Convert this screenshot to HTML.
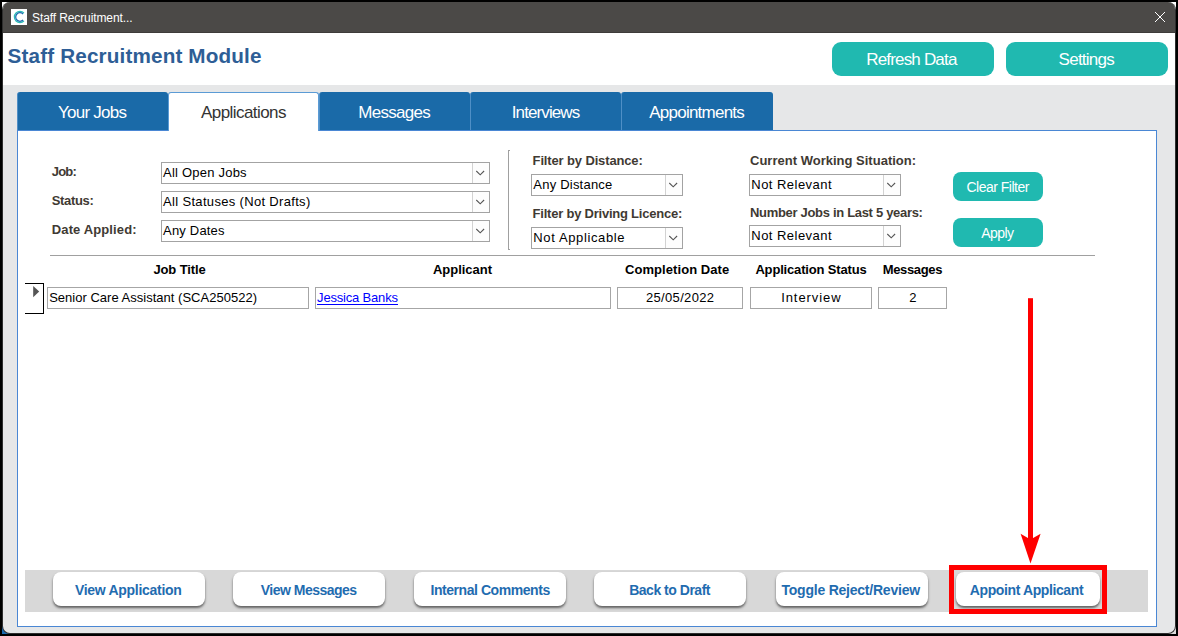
<!DOCTYPE html>
<html><head><meta charset="utf-8">
<style>
*{box-sizing:border-box;margin:0;padding:0}
html,body{width:1178px;height:636px;overflow:hidden;background:#000;font-family:"Liberation Sans",sans-serif}
.abs{position:absolute}
.t{position:absolute;white-space:nowrap;line-height:1.15}
#win{position:absolute;left:3px;top:2px;width:1172px;height:631px;background:#e6e7e8;border-radius:7px;overflow:hidden}
#tbar{position:absolute;left:0;top:0;width:100%;height:31px;background:#4b4947;border-bottom:1px solid #3e3c3a}
#hdr{position:absolute;left:0;top:31px;width:100%;height:52px;background:#fff}
.tbtn{position:absolute;background:#20b9b0;border-radius:9px}
.tab{position:absolute;top:90px;height:38px;width:151px;background:#1a6aa8;border-radius:3px 3px 0 0;border-left:1px solid #4f8fc6}
.tab.act{background:#fff;border:1px solid #5b9bd5;border-bottom:none;height:39px}
#panel{position:absolute;left:14px;top:128px;width:1140px;height:497px;background:#fff;border:1px solid #4a87d4}
.cmb{position:absolute;height:22px;border:1px solid #a3a3a3;background:#fff}
.cmb i{position:absolute;right:0;top:0;bottom:0;width:17px;border-left:1px solid #d2d2d2;background:#fdfdfd}
.cmb i svg{position:absolute;left:-1px;top:0}
.fld{position:absolute;top:285px;height:22px;border:1px solid #a6a6a6;background:#fff}
.bbtn{position:absolute;top:570.3px;height:33.7px;width:152px;background:#fff;border-radius:8px;box-shadow:0 2px 2.5px rgba(0,0,0,.55)}
</style></head><body>
<div class="abs" style="left:2px;top:2px;width:9px;height:9px;background:#fff"></div>
<div class="abs" style="left:1167px;top:2px;width:9px;height:9px;background:#fff"></div>
<div class="abs" style="left:2px;top:625px;width:9px;height:9px;background:#1c6bb0"></div>
<div class="abs" style="left:1167px;top:625px;width:9px;height:9px;background:#dcdcdc"></div>
<div class="abs" style="left:2px;top:2px;width:1174px;height:632px;background:#2e2e2e;border-radius:8px"></div>
<div id="win">
 <div id="tbar">
  <div class="abs" style="left:8px;top:7px;width:16px;height:16px;background:#fff"></div>
  <svg class="abs" style="left:8px;top:7px" width="16" height="16" viewBox="0 0 16 16"><path d="M12.96 4.04A5.6 5.6 0 1 0 12.96 11.96" fill="none" stroke="#2bbdb5" stroke-width="1.25"/><path d="M12.04 4.96A4.3 4.3 0 1 0 12.04 11.04" fill="none" stroke="#1f6cb0" stroke-width="1.25"/></svg>
  <svg class="abs" style="left:1151px;top:9px" width="12" height="12" viewBox="0 0 12 12"><path d="M1 1L11 11M11 1L1 11" stroke="#fff" stroke-width="1" fill="none"/></svg>
 </div>
 <div id="hdr">
  <div class="tbtn" style="left:829px;top:9px;width:162px;height:34px"></div>
  <div class="tbtn" style="left:1003px;top:9px;width:162px;height:34px"></div>
 </div>
 <div class="tab" style="left:14px"></div>
 <div class="tab" style="left:316px"></div>
 <div class="tab" style="left:467px"></div>
 <div class="tab" style="left:618px;width:152px"></div>
 <div id="panel"></div>
 <div class="tab act" style="left:165px"></div>

 <!-- filters -->
 <div class="cmb" style="left:158px;top:160px;width:329px"><i><svg width="17" height="20"><path d="M4.3 8L8.2 11.8L12.1 8" fill="none" stroke="#555" stroke-width="1.1"/></svg></i></div>
 <div class="cmb" style="left:158px;top:189px;width:329px"><i><svg width="17" height="20"><path d="M4.3 8L8.2 11.8L12.1 8" fill="none" stroke="#555" stroke-width="1.1"/></svg></i></div>
 <div class="cmb" style="left:158px;top:218px;width:329px"><i><svg width="17" height="20"><path d="M4.3 8L8.2 11.8L12.1 8" fill="none" stroke="#555" stroke-width="1.1"/></svg></i></div>
 <div class="abs" style="left:505px;top:148px;width:1px;height:100px;background:#a0a0a0"></div><div class="abs" style="left:506px;top:148px;width:1px;height:1px;background:#a0a0a0"></div><div class="abs" style="left:506px;top:247px;width:1px;height:1px;background:#a0a0a0"></div>
 <div class="cmb" style="left:528px;top:172px;width:152px"><i><svg width="17" height="20"><path d="M4.3 8L8.2 11.8L12.1 8" fill="none" stroke="#555" stroke-width="1.1"/></svg></i></div>
 <div class="cmb" style="left:528px;top:225px;width:152px"><i><svg width="17" height="20"><path d="M4.3 8L8.2 11.8L12.1 8" fill="none" stroke="#555" stroke-width="1.1"/></svg></i></div>
 <div class="cmb" style="left:746px;top:172px;width:152px"><i><svg width="17" height="20"><path d="M4.3 8L8.2 11.8L12.1 8" fill="none" stroke="#555" stroke-width="1.1"/></svg></i></div>
 <div class="cmb" style="left:746px;top:223px;width:152px"><i><svg width="17" height="20"><path d="M4.3 8L8.2 11.8L12.1 8" fill="none" stroke="#555" stroke-width="1.1"/></svg></i></div>
 <div class="tbtn" style="left:950px;top:170px;width:90px;height:29px;border-radius:8px"></div>
 <div class="tbtn" style="left:950px;top:216px;width:90px;height:29px;border-radius:8px"></div>
 <div class="abs" style="left:47px;top:253px;width:1045px;height:1px;background:#a0a0a0"></div>

 <!-- table -->
 <div class="abs" style="left:22px;top:281px;width:19px;height:31px;border:1px solid #000;border-left:none"></div>
 <svg class="abs" style="left:30px;top:284px" width="7" height="12"><path d="M0.2 0L6.2 5.6L0.2 11.2Z" fill="#555"/></svg>
 <div class="fld" style="left:44px;width:262px"></div>
 <div class="fld" style="left:312px;width:296px"></div>
 <div class="fld" style="left:614px;width:126px"></div>
 <div class="fld" style="left:747px;width:122px"></div>
 <div class="fld" style="left:875px;width:69px"></div>

 <!-- bottom bar -->
 <div class="abs" style="left:22px;top:568px;width:1123px;height:42px;background:#d8d8d8"></div>
 <div class="bbtn" style="left:49.6px"></div>
 <div class="bbtn" style="left:230.4px"></div>
 <div class="bbtn" style="left:411.3px"></div>
 <div class="bbtn" style="left:591.3px"></div>
 <div class="bbtn" style="left:772.5px"></div>
 <div class="bbtn" style="left:952.6px;width:144px"></div>

<span id="ttl" class="t" style="left:29.00px;top:10px;font-size:12px;color:#fff;letter-spacing:-0.105px;">Staff Recruitment...</span>
<span id="h1" class="t" style="left:4.60px;top:41.8px;font-size:20.7px;font-weight:bold;color:#2e5e96;letter-spacing:0.144px;">Staff Recruitment Module</span>
<span id="b1" class="t" style="left:863.20px;top:48px;font-size:17px;color:#fff;letter-spacing:-0.816px;">Refresh Data</span>
<span id="b2" class="t" style="left:1055.60px;top:48px;font-size:17px;color:#fff;letter-spacing:-0.748px;">Settings</span>
<span id="tab1" class="t" style="left:55.00px;top:101px;font-size:17px;color:#fff;letter-spacing:-0.761px;">Your Jobs</span>
<span id="tab2" class="t" style="left:198.00px;top:101px;font-size:17px;color:#333;letter-spacing:-0.561px;">Applications</span>
<span id="tab3" class="t" style="left:355.30px;top:101px;font-size:17px;color:#fff;letter-spacing:-0.712px;">Messages</span>
<span id="tab4" class="t" style="left:508.80px;top:101px;font-size:17px;color:#fff;letter-spacing:-0.903px;">Interviews</span>
<span id="tab5" class="t" style="left:646.30px;top:101px;font-size:17px;color:#fff;letter-spacing:-0.768px;">Appointments</span>
<span id="l1" class="t" style="left:48.80px;top:163px;font-size:13px;font-weight:bold;color:#3f3a33;letter-spacing:-0.818px;">Job:</span>
<span id="l2" class="t" style="left:48.80px;top:192px;font-size:13px;font-weight:bold;color:#3f3a33;letter-spacing:-0.344px;">Status:</span>
<span id="l3" class="t" style="left:48.80px;top:221px;font-size:13px;font-weight:bold;color:#3f3a33;letter-spacing:0.124px;">Date Applied:</span>
<span id="c1" class="t" style="left:160.10px;top:164px;font-size:13px;color:#000;letter-spacing:0.214px;">All Open Jobs</span>
<span id="c2" class="t" style="left:160.10px;top:193px;font-size:13px;color:#000;letter-spacing:0.323px;">All Statuses (Not Drafts)</span>
<span id="c3" class="t" style="left:160.10px;top:222px;font-size:13px;color:#000;letter-spacing:0.177px;">Any Dates</span>
<span id="l4" class="t" style="left:529.60px;top:152px;font-size:13px;font-weight:bold;color:#3f3a33;letter-spacing:-0.139px;">Filter by Distance:</span>
<span id="l5" class="t" style="left:529.60px;top:205px;font-size:13px;font-weight:bold;color:#3f3a33;letter-spacing:-0.225px;">Filter by Driving Licence:</span>
<span id="c4" class="t" style="left:530.30px;top:176px;font-size:13px;color:#000;letter-spacing:0.219px;">Any Distance</span>
<span id="c5" class="t" style="left:530.30px;top:229px;font-size:13px;color:#000;letter-spacing:0.621px;">Not Applicable</span>
<span id="l6" class="t" style="left:747.00px;top:152px;font-size:13px;font-weight:bold;color:#3f3a33;letter-spacing:0.009px;">Current Working Situation:</span>
<span id="l7" class="t" style="left:747.00px;top:204px;font-size:13px;font-weight:bold;color:#3f3a33;letter-spacing:-0.313px;">Number Jobs in Last 5 years:</span>
<span id="c6" class="t" style="left:748.30px;top:176px;font-size:13px;color:#000;letter-spacing:0.468px;">Not Relevant</span>
<span id="c7" class="t" style="left:748.30px;top:227px;font-size:13px;color:#000;letter-spacing:0.468px;">Not Relevant</span>
<span id="b3" class="t" style="left:963.50px;top:177px;font-size:14px;color:#fff;letter-spacing:-0.506px;">Clear Filter</span>
<span id="b4" class="t" style="left:978.30px;top:223px;font-size:14px;color:#fff;letter-spacing:-0.608px;">Apply</span>
<span id="h_1" class="t" style="left:150.40px;top:261px;font-size:13px;font-weight:bold;color:#000;letter-spacing:-0.115px;">Job Title</span>
<span id="h_2" class="t" style="left:430.00px;top:261px;font-size:13px;font-weight:bold;color:#000;letter-spacing:-0.029px;">Applicant</span>
<span id="h_3" class="t" style="left:622.00px;top:261px;font-size:13px;font-weight:bold;color:#000;letter-spacing:0.065px;">Completion Date</span>
<span id="h_4" class="t" style="left:752.40px;top:261px;font-size:13px;font-weight:bold;color:#000;letter-spacing:-0.166px;">Application Status</span>
<span id="h_5" class="t" style="left:879.70px;top:261px;font-size:13px;font-weight:bold;color:#000;letter-spacing:-0.337px;">Messages</span>
<span id="f1" class="t" style="left:46.20px;top:289px;font-size:13px;color:#000;letter-spacing:0.013px;">Senior Care Assistant (SCA250522)</span>
<span id="f2" class="t" style="left:314.10px;top:289px;font-size:13px;color:#0000ff;letter-spacing:-0.183px;">Jessica Banks</span>
<span id="f3" class="t" style="left:643.00px;top:289px;font-size:13px;color:#000;letter-spacing:0.325px;">25/05/2022</span>
<span id="f4" class="t" style="left:778.20px;top:289px;font-size:13px;color:#000;letter-spacing:0.921px;">Interview</span>
<span id="f5" class="t" style="left:906.20px;top:289px;font-size:13px;color:#000;letter-spacing:0.000px;">2</span>
<span id="bb1" class="t" style="left:71.90px;top:579.7px;font-size:14px;font-weight:bold;color:#1f6cb0;letter-spacing:-0.283px;">View Application</span>
<span id="bb2" class="t" style="left:257.80px;top:579.7px;font-size:14px;font-weight:bold;color:#1f6cb0;letter-spacing:-0.515px;">View Messages</span>
<span id="bb3" class="t" style="left:427.50px;top:579.7px;font-size:14px;font-weight:bold;color:#1f6cb0;letter-spacing:-0.445px;">Internal Comments</span>
<span id="bb4" class="t" style="left:626.20px;top:579.7px;font-size:14px;font-weight:bold;color:#1f6cb0;letter-spacing:-0.487px;">Back to Draft</span>
<span id="bb5" class="t" style="left:778.50px;top:579.7px;font-size:14px;font-weight:bold;color:#1f6cb0;letter-spacing:-0.227px;">Toggle Reject/Review</span>
<span id="bb6" class="t" style="left:966.80px;top:579.7px;font-size:14px;font-weight:bold;color:#1f6cb0;letter-spacing:-0.389px;">Appoint Applicant</span>
 <div class="abs" style="left:314px;top:302px;width:81px;height:1px;background:#00f"></div>

 <!-- red annotation -->
 <div class="abs" style="left:946px;top:563px;width:158px;height:49px;border:5px solid #f00"></div>
 <svg class="abs" style="left:1012px;top:292px" width="32" height="275" viewBox="0 0 32 275"><rect x="13" y="4.2" width="5" height="243" fill="#f00"/><path d="M5.6 239.7L15.5 269.4L25.6 239.7L15.5 245.5Z" fill="#f00"/></svg>
</div>
</body></html>
